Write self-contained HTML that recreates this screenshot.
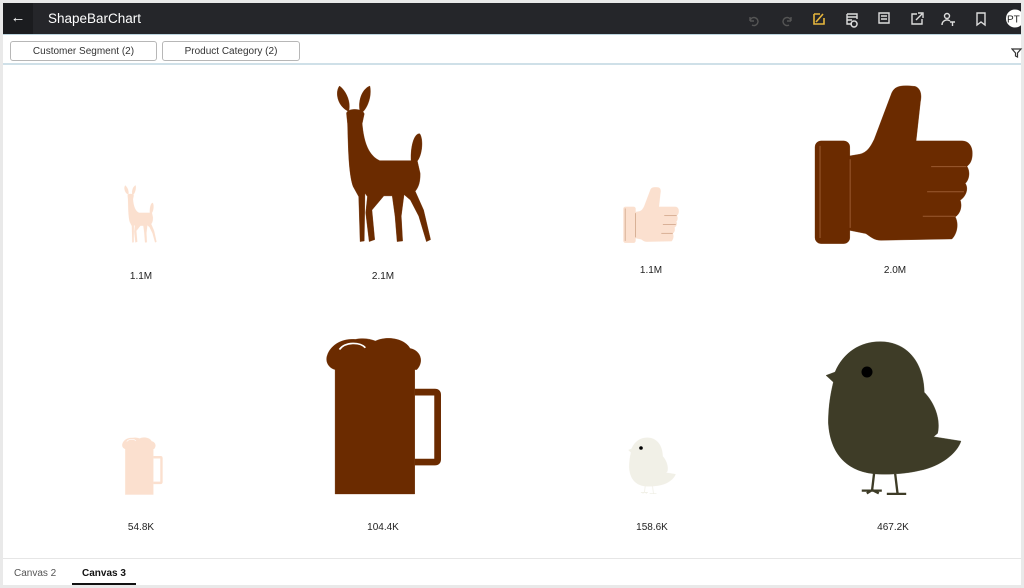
<!DOCTYPE html>
<html><head><meta charset="utf-8"><style>
*{margin:0;padding:0;box-sizing:border-box}
body{width:1024px;height:588px;background:#e9e9e9;font-family:"Liberation Sans",sans-serif;position:relative;overflow:hidden}
.page{position:absolute;left:3px;top:3px;width:1018px;height:582px;background:#fff}
.hdr{position:absolute;left:0;top:0;width:1018px;height:31px;background:#25262a}
.back{position:absolute;left:0;top:0;width:30px;height:31px;background:#1b1c1f;color:#fff;font-size:15px;line-height:29px;text-align:center}
.title{position:absolute;left:45px;top:8px;color:#fff;font-size:13.5px}
.fbar{position:absolute;left:0;top:31px;width:1018px;height:31px;border-top:1px solid #bcd4de;border-bottom:2px solid #cfe0e8}
.btn{position:absolute;top:6px;height:20px;border:1px solid #b7b7b7;border-radius:3px;font-size:10px;color:#333;text-align:center;line-height:20px}
.lbl{position:absolute;font-size:10px;color:#222;transform:translateX(-50%)}
.tabs{position:absolute;left:0;top:555px;width:1018px;height:27px;border-top:1px solid #e6e6e6}
.tab{position:absolute;top:9px;font-size:10px}
svg.s{position:absolute;left:0;top:0}
</style></head><body>
<div class="page">
<div class="hdr">
<div class="back">&#8592;</div>
<div class="title">ShapeBarChart</div>
<svg class="s" width="1018" height="31" style="left:0;top:0">
<g fill="none" stroke-width="1.4">
<path d="M747 18 a4 4 0 1 1 2 4 M747 18 l0 -4 M747 18 l4 0" stroke="#555"/>
<path d="M788 18 a4 4 0 1 0 -2 4 M788 18 l0 -4 M788 18 l-4 0" stroke="#555"/>
<path d="M811 11 h6 M811 11 v10 h10 v-6 M813 19 l7 -8" stroke="#e6b63c" stroke-width="1.6"/>
<path d="M844 11 h10 v5 M844 11 v10 h5 M844 14 h10 M844 17 h5 M851 18 a3 3 0 1 0 0.1 0" stroke="#ddd"/>
<path d="M876 10 h10 v10 h-10 z M878 13 h6 M878 16 h6" stroke="#ddd"/>
<path d="M914 11 h-5 v10 h10 v-5 M913 17 l6 -6 M915 10 h5 v5" stroke="#ddd"/>
<circle cx="944" cy="13" r="2.5" stroke="#ddd"/><path d="M939 22 a5 5 0 0 1 8 -4 M947 19 h5 M949.5 19 v4" stroke="#ddd"/>
<path d="M974 10 h8 v12 l-4 -3 l-4 3 z" stroke="#ddd"/>
</g>
<circle cx="1012" cy="15.5" r="9" fill="#fff"/>
<text x="1004" y="19.5" font-size="10" fill="#222" font-family="Liberation Sans">PT</text>
</svg>
</div>
<div class="fbar">
<div class="btn" style="left:7px;width:147px">Customer Segment (2)</div>
<div class="btn" style="left:159px;width:138px">Product Category (2)</div>
<svg class="s" width="12" height="12" style="left:1008px;top:12px"><path d="M1 2 h9 l-3.5 4 v4 l-2 -1 v-3 z" fill="none" stroke="#333" stroke-width="1.2"/></svg>
</div>
<div class="tabs">
<div class="tab" style="left:11px;color:#555">Canvas 2</div>
<div class="tab" style="left:79px;color:#111;font-weight:bold">Canvas 3</div>
<div style="position:absolute;left:69px;top:24px;width:64px;height:2px;background:#111"></div>
</div>
</div>
<svg class="s" width="1024" height="588">
<defs>
<symbol id="deer" viewBox="115 30 275 470" preserveAspectRatio="none">
<path d="M150,108 C118,92 112,50 125,33 C142,45 158,78 152,106 Z M183,106 C178,70 193,40 212,33 C218,60 207,95 192,110 Z"/>
<path d="M145,115 C145,98 192,98 196,116 L190,145 C195,205 210,240 240,255 L330,255 C328,210 340,172 355,175 C366,192 362,238 348,256 L356,292 C357,325 348,338 342,346 L366,402 L386,490 L374,496 L352,420 L328,372 L310,356 L302,420 L306,494 L290,496 L284,420 L276,360 L252,360 L218,402 L226,490 L210,496 L200,410 L205,362 L198,352 L196,494 L184,496 L180,362 L164,332 C150,292 150,200 148,145 Z"/>
</symbol>
<symbol id="thumb" viewBox="40 28 475 475" preserveAspectRatio="none">
<rect x="43" y="195" width="104" height="307" rx="18"/>
<path d="M145,240 L175,235 C200,230 210,210 220,190 L272,52 C282,30 300,28 342,32 C360,38 362,60 358,78 L345,195 L482,195 C503,195 513,212 513,232 C513,258 503,266 497,271 C508,288 503,312 492,322 C503,338 493,362 477,372 C483,390 478,412 462,422 C473,442 468,472 452,488 L240,492 C220,492 210,482 195,472 L145,462 Z"/>
<g fill="none" stroke="#9a5a30" stroke-width="3"><path d="M390,272 H495 M378,347 H488 M365,420 H462 M58,210 V485 M148,250 V455"/></g>
</symbol>
<symbol id="beer" viewBox="48 38 345 470" preserveAspectRatio="none">
<path d="M75,505 V135 C55,130 45,110 52,92 C62,62 95,42 135,45 C160,40 180,44 195,50 C225,35 280,40 298,72 C330,78 340,112 318,135 L312,135 V505 Z"/>
<path d="M312,202 H372 Q380,202 380,210 V402 Q380,410 372,410 H312" fill="none" stroke-width="20" stroke="inherit"/>
<path d="M88,75 C105,52 150,52 165,70" fill="none" stroke="#fff" stroke-width="5"/>
</symbol>
<symbol id="bird" viewBox="75 45 410 460" preserveAspectRatio="none">
<path d="M78,150 L105,140 C130,82 180,50 240,50 C320,50 370,110 372,200 C402,230 422,280 412,322 L400,332 L482,345 C470,382 420,420 360,432 C320,442 260,446 220,442 C130,432 90,372 85,292 C85,232 95,192 100,170 Z"/>
<g fill="none" stroke-width="7" stroke="inherit"><path d="M222,440 L216,490 M185,492 H245 M216,490 L200,500 M216,490 L236,500 M285,442 L292,500 M260,502 H318 M292,500 L276,510 M292,500 L310,508"/></g>
</symbol>
</defs>
<g fill="#fbe0cf" stroke="#fbe0cf"><use href="#deer" x="124" y="185" width="33" height="58"/><use href="#thumb" x="623" y="187" width="56" height="56"/><use href="#beer" x="122" y="437" width="41" height="58"/></g>
<g fill="#6b2b00" stroke="#6b2b00"><use href="#deer" x="336" y="85" width="96" height="158"/><use href="#thumb" x="814" y="85" width="159" height="159"/><use href="#beer" x="326" y="337" width="116" height="158"/></g>
<g fill="#3e3c27" stroke="#3e3c27"><use href="#bird" x="825" y="340" width="137" height="155"/></g>
<circle cx="867" cy="372" r="5.5" fill="#000"/>
<g fill="#f1f0e7" stroke="#f1f0e7"><use href="#bird" x="628" y="437" width="48" height="57"/></g>
<circle cx="641" cy="448" r="1.8" fill="#000"/>
</svg>
<div class="lbl" style="left:141px;top:271px">1.1M</div>
<div class="lbl" style="left:383px;top:271px">2.1M</div>
<div class="lbl" style="left:651px;top:265px">1.1M</div>
<div class="lbl" style="left:895px;top:265px">2.0M</div>
<div class="lbl" style="left:141px;top:522px">54.8K</div>
<div class="lbl" style="left:383px;top:522px">104.4K</div>
<div class="lbl" style="left:652px;top:522px">158.6K</div>
<div class="lbl" style="left:893px;top:522px">467.2K</div>
</body></html>
